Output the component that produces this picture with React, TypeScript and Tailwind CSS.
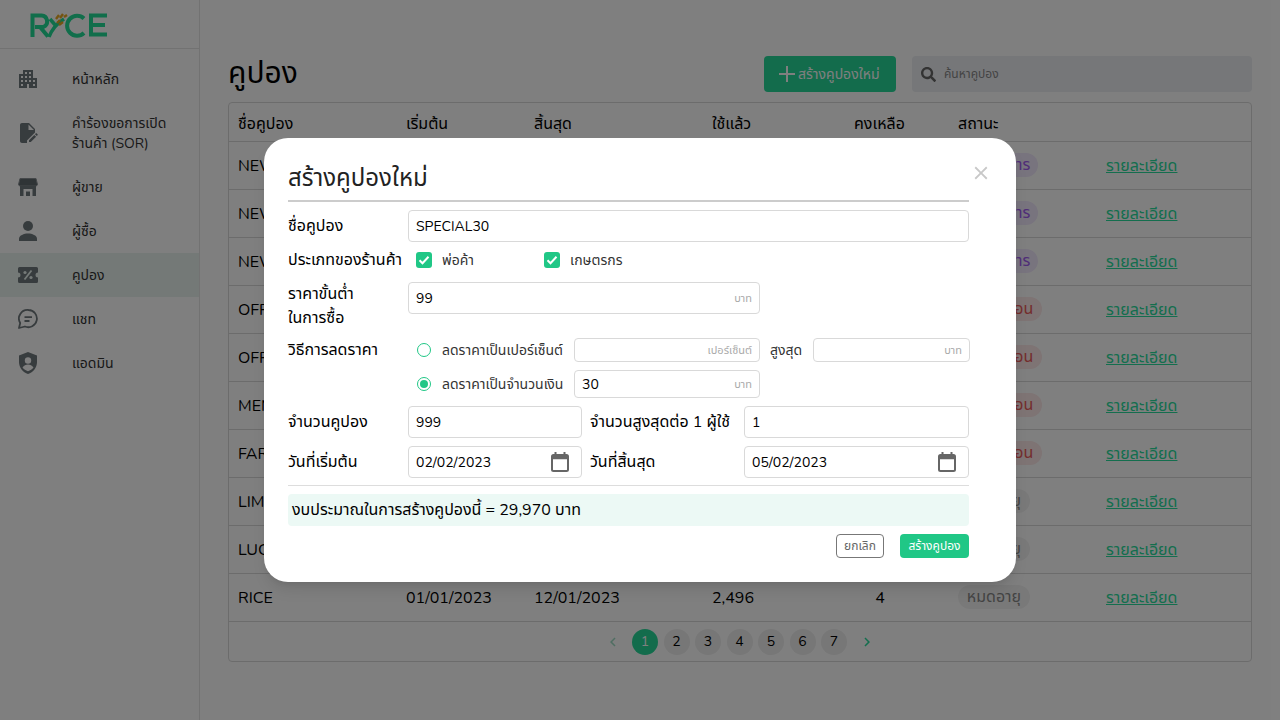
import { FaSearch } from "react-icons/fa";
import { MdApartment, MdClose, MdChevronLeft, MdChevronRight } from "react-icons/md";

const font = "font-['Nunito','Noto_Sans','Noto_Sans_Thai',sans-serif]";

function DocIcon() {
  return (
    <svg viewBox="0 0 24 24" className="h-6 w-6 fill-current">
      <path d="M6 2c-1.100 0-2 .9-2 2v16c0 1.100.9 2 2 2h5v-2.600l8-8V8l-6-6H6zm6.500 1.500L18 9h-5.500V3.500z" />
      <path d="M21.700 13.400l-1.100-1.100c-.2-.2-.5-.2-.7 0l-.9.9 1.800 1.800.9-.9c.2-.2.2-.5 0-.7zM13 19.200V21h1.800l5.300-5.300-1.800-1.800L13 19.200z" />
    </svg>
  );
}

function StoreIcon() {
  return (
    <svg viewBox="0 0 20 20" className="h-5 w-5">
      <path d="M2 1.500h16l1.500 6a2 2 0 0 1-1.500 1.500H2A2 2 0 0 1 .5 7.500z" fill="#5f686c" stroke="#8a9094" strokeWidth="1" />
      <path d="M2 9h16v10H2z" fill="#6f787c" />
      <path d="M5.500 12h9v7h-2.500v-4.500H8V19H5.500z" fill="#ffffff" />
    </svg>
  );
}

function PersonIcon() {
  return (
    <svg viewBox="0 0 18 20" className="h-5 w-[18px] fill-current">
      <circle cx="9" cy="5" r="5" />
      <path d="M0 20v-2.500C0 14.500 5 12.500 9 12.500s9 2 9 5V20z" />
    </svg>
  );
}

function CouponIcon() {
  return (
    <svg viewBox="0 0 20 16" className="h-4 w-5">
      <path d="M1.500 0h17A1.500 1.500 0 0 1 20 1.500V5.500a2.500 2.500 0 0 0 0 5v4a1.500 1.500 0 0 1-1.500 1.500h-17A1.500 1.500 0 0 1 0 14.500v-4a2.500 2.500 0 0 0 0-5v-4A1.500 1.500 0 0 1 1.500 0z" fill="currentColor" />
      <path d="M13.500 3.500l-7 9" stroke="#e8f3ef" strokeWidth="1.800" />
      <circle cx="7" cy="5.500" r="1.600" fill="#e8f3ef" />
      <circle cx="13" cy="10.500" r="1.600" fill="#e8f3ef" />
    </svg>
  );
}

function ChatIcon() {
  return (
    <svg viewBox="0 0 20 20" className="h-5 w-5" fill="none" stroke="currentColor" strokeWidth="1.800">
      <path d="M10.500 1a8.600 8.600 0 1 1-3.600 16.500L1 19l1.200-5A8.600 8.600 0 0 1 10.500 1z" strokeLinejoin="round" />
      <path d="M6.500 8.200h7.500M6.500 12h5" />
    </svg>
  );
}

function ShieldIcon() {
  return (
    <svg viewBox="0 0 18 22" className="h-[22px] w-[18px]">
      <path d="M9 0l9 3.500V10c0 5.500-3.800 10.300-9 12C3.800 20.300 0 15.500 0 10V3.500z" fill="currentColor" />
      <circle cx="9" cy="8.500" r="3.200" fill="#ffffff" />
      <path d="M3.500 15.500c1.300-2 3.500-3 5.500-3s4.200 1 5.500 3c-1.300 1.800-3.300 3-5.500 3.800-2.200-.8-4.200-2-5.500-3.800z" fill="#ffffff" />
    </svg>
  );
}

function CalendarIcon() {
  return (
    <svg viewBox="0 0 18 20" className="h-5 w-[18px] shrink-0" fill="none" stroke="#666666">
      <rect x="1" y="3" width="16" height="16" rx="1.500" strokeWidth="2" />
      <path d="M1 5.500h16" strokeWidth="3.500" />
      <path d="M4.500 0v3M13.500 0v3" strokeWidth="2" />
    </svg>
  );
}

const navItems = [
  { label: "หน้าหลัก", icon: <MdApartment size={24} />, h: "h-11" },
  { label: "คำร้องขอการเปิด ร้านค้า (SOR)", icon: <DocIcon />, h: "h-[64px]" },
  { label: "ผู้ขาย", icon: <StoreIcon />, h: "h-11" },
  { label: "ผู้ซื้อ", icon: <PersonIcon />, h: "h-11" },
  { label: "คูปอง", icon: <CouponIcon />, h: "h-11", active: true },
  { label: "แชท", icon: <ChatIcon />, h: "h-11" },
  { label: "แอดมิน", icon: <ShieldIcon />, h: "h-11" },
];

const statusStyles = {
  purple: "w-[80px] bg-[#f1e8fd] text-[#a05cf0]",
  red: "w-[84px] bg-[#fde8e8] text-[#e85a5a]",
  gray: "w-[72px] bg-[#f3f3f3] text-[#888888]",
};

const rows = [
  { name: "NEWUSER50", start: "01/02/2023", end: "28/02/2023", used: "0", left: "500", status: "ดำเนินการ", tone: "purple" },
  { name: "NEWYEAR20", start: "01/02/2023", end: "28/02/2023", used: "0", left: "300", status: "ดำเนินการ", tone: "purple" },
  { name: "NEWSHOP10", start: "01/02/2023", end: "28/02/2023", used: "0", left: "200", status: "ดำเนินการ", tone: "purple" },
  { name: "OFF100", start: "01/01/2023", end: "31/01/2023", used: "120", left: "880", status: "ใช้งานก่อน", tone: "red" },
  { name: "OFF50", start: "01/01/2023", end: "31/01/2023", used: "340", left: "660", status: "ใช้งานก่อน", tone: "red" },
  { name: "MEMBER15", start: "01/01/2023", end: "31/01/2023", used: "415", left: "85", status: "ใช้งานก่อน", tone: "red" },
  { name: "FARMER5", start: "01/01/2023", end: "31/01/2023", used: "96", left: "4", status: "ใช้งานก่อน", tone: "red" },
  { name: "LIMITED", start: "01/12/2022", end: "31/12/2022", used: "1,000", left: "0", status: "หมดอายุ", tone: "gray" },
  { name: "LUCKY", start: "01/12/2022", end: "31/12/2022", used: "1,500", left: "0", status: "หมดอายุ", tone: "gray" },
  { name: "RICE", start: "01/01/2023", end: "12/01/2023", used: "2,496", left: "4", status: "หมดอายุ", tone: "gray" },
] as const;

function Field({ value, suffix, className }: { value?: string; suffix?: string; className: string }) {
  return (
    <div className={`flex items-center rounded border border-[#d9d9d9] bg-white pl-[7px] pr-[7px] ${className}`}>
      <span className="pt-[2px] text-[14px] leading-none text-black">{value}</span>
      {suffix && <span className="ml-auto text-[11px] leading-none text-[#aaaaaa]">{suffix}</span>}
    </div>
  );
}

function DateField({ value, className }: { value: string; className: string }) {
  return (
    <div className={`flex h-8 items-center justify-between rounded border border-[#d9d9d9] bg-white pl-[7px] pr-3 ${className}`}>
      <span className="pt-[2px] text-[14px] leading-none text-black">{value}</span>
      <CalendarIcon />
    </div>
  );
}

function Check({ label, className }: { label: string; className: string }) {
  return (
    <div className={`flex items-center gap-[10px] ${className}`}>
      <span className="flex h-4 w-4 items-center justify-center rounded-[3px] bg-[#20c786]">
        <svg viewBox="0 0 12 12" className="h-3 w-3" fill="none" stroke="#ffffff" strokeWidth="2">
          <path d="M1.500 6.200l3 3 6-6.400" />
        </svg>
      </span>
      <span className="text-[14px] text-[#333333]">{label}</span>
    </div>
  );
}

function Radio({ checked, label }: { checked?: boolean; label: string }) {
  return (
    <div className="flex w-[166px] shrink-0 items-center gap-[11px] pl-[9px]">
      <span className="flex h-[14px] w-[14px] shrink-0 items-center justify-center rounded-full border border-[#20c786]">
        {checked && <span className="h-2 w-2 rounded-full bg-[#20c786]" />}
      </span>
      <span className="whitespace-nowrap text-[14px] text-[#333333]">{label}</span>
    </div>
  );
}

export default function App() {
  return (
    <div className={`relative flex h-[720px] w-[1280px] overflow-hidden bg-white ${font}`}>
      <aside className="w-[200px] shrink-0 border-r border-[#e5e5e5]">
        <div className="flex h-[49px] items-start border-b border-[#e5e5e5] pl-[30px] pt-[12px]">
          <svg viewBox="0 0 78 26" className="h-[26px] w-[78px]">
            <path d="M2.500 25V3.500h9a6 6 0 0 1 2 11.500H5M10 15l8 9.500" fill="none" stroke="#22dc96" strokeWidth="4" />
            <path d="M19 25c3-8 7-13 15-18" fill="none" stroke="#22dc96" strokeWidth="3.500" />
            <path d="M20 7l6 7" fill="none" stroke="#22dc96" strokeWidth="3.500" />
            <path d="M27 11l3-3m-1 5l4-3m-7-3l3-4m1 3l3-4m1 3l3-2" stroke="#e8a820" strokeWidth="2.400" fill="none" />
            <path d="M54 6.500A10 10 0 1 0 54 21" fill="none" stroke="#22dc96" strokeWidth="4" />
            <path d="M77 3.500H61v19h16M61 13h14" fill="none" stroke="#22dc96" strokeWidth="4" />
          </svg>
        </div>
        <nav className="pt-2">
          {navItems.map((item) => (
            <div key={item.label} className={`flex items-center pl-4 pr-6 text-[#333333] ${item.h} ${item.active ? "bg-[#e8f3ef]" : ""}`}>
              <span className="flex w-[24px] justify-center text-[#6f787c]">{item.icon}</span>
              <span className="ml-8 pt-[2px] text-[14px] leading-5">{item.label}</span>
            </div>
          ))}
        </nav>
      </aside>

      <main className="flex-1 px-7 pt-14">
        <div className="flex h-9 items-center">
          <h1 className="text-[30px] leading-9 text-black">คูปอง</h1>
          <button className="ml-auto flex h-9 w-[132px] items-center gap-[3px] rounded bg-[#26d899] pl-[15px] text-[14px] text-white">
            <svg viewBox="0 0 16 16" className="h-4 w-4" stroke="currentColor" strokeWidth="2">
              <path d="M8 0v16M0 8h16" />
            </svg>
            สร้างคูปองใหม่
          </button>
          <div className="ml-4 flex h-9 w-[340px] items-center gap-2 rounded bg-[#eceef2] pl-[9px] text-[12px] text-[#888888]">
            <FaSearch size={15} className="text-[#666666]" />
            ค้นหาคูปอง
          </div>
        </div>

        <div className="mt-[10px] rounded border border-[#d9d9d9]">
          <table className="w-full table-fixed text-[16px] text-black">
            <thead>
              <tr className="h-[38px] text-left">
                <th className="w-[177px] pl-[9px] pt-[4px] font-normal">ชื่อคูปอง</th>
                <th className="w-[128px] pt-[4px] font-normal">เริ่มต้น</th>
                <th className="w-[178px] pt-[4px] font-normal">สิ้นสุด</th>
                <th className="w-[142px] pt-[4px] font-normal">ใช้แล้ว</th>
                <th className="w-[104px] pt-[4px] font-normal">คงเหลือ</th>
                <th className="w-[148px] pt-[4px] font-normal">สถานะ</th>
                <th />
              </tr>
            </thead>
            <tbody>
              {rows.map((row) => (
                <tr key={row.name} className="h-[48px] border-t border-[#d9d9d9]">
                  <td className="pl-[9px] pt-[2px]">{row.name}</td>
                  <td className="pt-[2px]">{row.start}</td>
                  <td className="pt-[2px]">{row.end}</td>
                  <td className="pt-[2px]">{row.used}</td>
                  <td className="pt-[2px]"><span className="inline-block w-[52px] text-center">{row.left}</span></td>
                  <td>
                    <span className={`inline-block h-6 whitespace-nowrap rounded-full text-center text-[16px] leading-6 ${statusStyles[row.tone]}`}>{row.status}</span>
                  </td>
                  <td className="pt-[2px]"><a className="text-[#28dc9c] underline">รายละเอียด</a></td>
                </tr>
              ))}
            </tbody>
          </table>
          <div className="flex h-[40px] items-center justify-center gap-[5.500px] border-t border-[#d9d9d9] text-[14px]">
            <MdChevronLeft size={18} className="mr-[4.500px] text-[#9fdcc4]" />
            {[1, 2, 3, 4, 5, 6, 7].map((n) => (
              <span key={n} className={`flex h-[26px] w-[26px] items-center justify-center rounded-full ${n === 1 ? "bg-[#26d899] text-white" : "bg-[#eeeeee] text-black"}`}>{n}</span>
            ))}
            <MdChevronRight size={18} className="ml-[5.500px] text-[#28dc9c]" />
          </div>
        </div>
      </main>

      <div className="absolute inset-0 z-10 bg-black/50" />

      <div className="absolute left-[264px] top-[138px] z-20 h-[444px] w-[752px] rounded-3xl bg-white pl-6 pr-[47px] pt-[24px] shadow-lg">
        <MdClose size={22} className="absolute right-[24px] top-[24px] text-[#c8c8c8]" />
        <h2 className="h-[40px] border-b-2 border-[#cccccc] text-[24px] leading-8 text-[#222222]">สร้างคูปองใหม่</h2>
        <div className="mt-2 flex h-8 items-center">
          <span className="w-[120px] text-[16px] text-black">ชื่อคูปอง</span>
          <Field value="SPECIAL30" className="h-8 flex-1" />
        </div>
        <div className="mt-2 flex h-5 items-center">
          <span className="w-[120px] whitespace-nowrap text-[16px] text-black">ประเภทของร้านค้า</span>
          <Check label="พ่อค้า" className="ml-2 w-[128px]" />
          <Check label="เกษตรกร" className="" />
        </div>
        <div className="mt-3 flex h-[48px] items-start">
          <span className="w-[120px] text-[16px] leading-6 text-black">ราคาขั้นต่ำ<br />ในการซื้อ</span>
          <Field value="99" suffix="บาท" className="h-8 w-[352px]" />
        </div>
        <div className="mt-2 flex h-6 items-center">
          <span className="w-[120px] shrink-0 text-[16px] text-black">วิธีการลดราคา</span>
          <Radio label="ลดราคาเป็นเปอร์เซ็นต์" />
          <Field suffix="เปอร์เซ็นต์" className="h-6 w-[186px] shrink-0" />
          <span className="ml-[10px] w-[43px] shrink-0 text-[14px] text-[#333333]">สูงสุด</span>
          <Field suffix="บาท" className="h-6 w-[157px] shrink-0" />
        </div>
        <div className="mt-2 flex h-7 items-center pl-[120px]">
          <Radio checked label="ลดราคาเป็นจำนวนเงิน" />
          <Field value="30" suffix="บาท" className="h-7 w-[186px]" />
        </div>
        <div className="mt-2 flex h-8 items-center">
          <span className="w-[120px] text-[16px] text-black">จำนวนคูปอง</span>
          <Field value="999" className="h-8 w-[174px]" />
          <span className="ml-2 w-[154px] whitespace-nowrap text-[16px] text-black">จำนวนสูงสุดต่อ 1 ผู้ใช้</span>
          <Field value="1" className="h-8 flex-1" />
        </div>
        <div className="mt-2 flex h-8 items-center">
          <span className="w-[120px] text-[16px] text-black">วันที่เริ่มต้น</span>
          <DateField value="02/02/2023" className="w-[174px]" />
          <span className="ml-2 w-[154px] text-[16px] text-black">วันที่สิ้นสุด</span>
          <DateField value="05/02/2023" className="flex-1" />
        </div>
        <div className="mt-[7px] border-t border-[#dddddd]" />
        <div className="mt-2 flex h-8 items-center rounded bg-[#ecf9f5] px-1 text-[16px] text-black">งบประมาณในการสร้างคูปองนี้ = 29,970 บาท</div>
        <div className="mt-2 flex justify-end gap-4">
          <button className="h-6 w-12 rounded border border-[#777777] text-[12px] text-[#666666]">ยกเลิก</button>
          <button className="h-6 w-[69px] rounded bg-[#20c786] text-[12px] text-white">สร้างคูปอง</button>
        </div>
      </div>
    </div>
  );
}
